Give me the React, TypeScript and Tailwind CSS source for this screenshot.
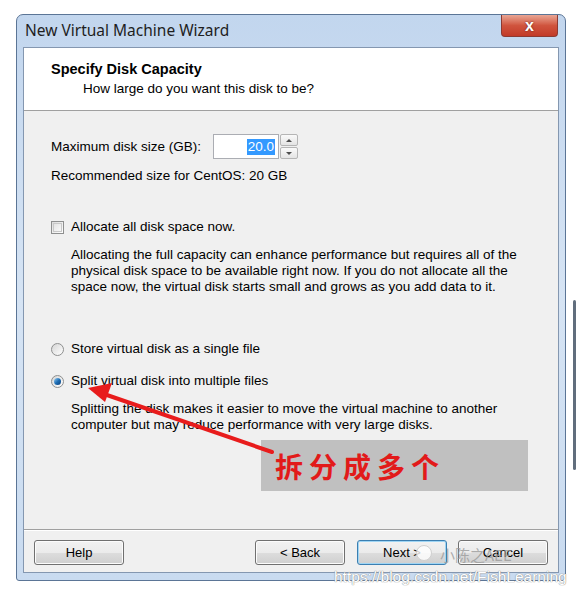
import React from 'react'

const ui = { fontFamily: '"Liberation Sans", Arial, sans-serif' }
const cjk = { fontFamily: '"Noto Sans CJK SC", "Liberation Sans", sans-serif' }

function WinButton({ label, focused }: { label: string; focused?: boolean }) {
  return (
    <div
      className={
        'h-[25px] w-[90px] rounded-[3px] border flex items-center justify-center text-[13px] text-black ' +
        (focused
          ? 'border-[#3c7fb1] shadow-[inset_0_0_0_1px_#9fd5f4]'
          : 'border-[#707070] shadow-[inset_0_0_0_1px_#fcfcfc]')
      }
      style={{
        background: 'linear-gradient(#f2f2f2 0%, #ebebeb 50%, #dddddd 51%, #cfcfcf 100%)',
      }}
    >
      {label}
    </div>
  )
}

function Radio({ checked }: { checked?: boolean }) {
  return (
    <div className="w-[13px] h-[13px] rounded-full border border-[#8e8f8f] bg-gradient-to-br from-[#d6d6d6] to-[#ffffff] flex items-center justify-center shrink-0">
      {checked && (
        <div className="w-[7px] h-[7px] rounded-full bg-gradient-to-br from-[#95d1f5] via-[#1e6fb5] to-[#0b3e7a]" />
      )}
    </div>
  )
}

export default function App() {
  return (
    <div className="relative w-[583px] h-[592px] bg-white overflow-hidden" style={ui}>
      {/* window */}
      <div className="ml-[16px] mt-[14px] w-[550px] h-[567px] rounded-t-[7px] rounded-b-[3px] border border-[#5b7596] bg-gradient-to-b from-[#c2d6ee] via-[#d6e4f4] to-[#c9dbf0] flex flex-col">
        {/* title bar */}
        <div className="h-[32px] flex items-start justify-between shrink-0">
          <span
            className="pl-[8px] pt-[4px] text-[15.5px] text-[#1e1e1e]"
            style={{ fontFamily: '"Noto Sans", "Open Sans", sans-serif' }}
          >
            New Virtual Machine Wizard
          </span>
          <div className="mr-[7px] w-[57px] h-[22px] rounded-b-[4px] border border-t-0 border-[#8c3a32] bg-gradient-to-b from-[#e8a594] via-[#d0543e] to-[#c23a28] flex items-center justify-center">
            <span className="text-white font-bold text-[16px] leading-none [text-shadow:0_0_2px_#5a1a12]">x</span>
          </div>
        </div>

        {/* client area */}
        <div className="mx-[6px] mb-[7px] flex-1 border border-[#8497b0] bg-[#f0f0f0] flex flex-col">
          {/* header */}
          <div className="h-[63px] bg-white border-b border-[#a0a0a0] shrink-0 pl-[27px] pt-[12px]">
            <div className="text-[14.5px] font-bold text-black leading-[18px]">Specify Disk Capacity</div>
            <div className="pl-[32px] mt-[2px] text-[13.5px] text-black leading-[18px]">
              How large do you want this disk to be?
            </div>
          </div>

          {/* body */}
          <div className="flex-1 pl-[27px] text-[13.5px] text-black leading-[16px] flex flex-col">
            <div className="mt-[23px] flex items-center h-[25px]">
              <span className="w-[162px]">Maximum disk size (GB):</span>
              <div className="w-[66px] h-[25px] border border-[#abadb3] bg-white flex items-center justify-end pr-[3px]">
                <span className="bg-[#3399ff] text-white px-[1px] leading-[16px]">20.0</span>
              </div>
              <div className="w-[19px] h-[25px] flex flex-col gap-[1px] pl-[1px]">
                <div className="flex-1 border border-[#b5b5b5] rounded-[2px] bg-gradient-to-b from-[#fafafa] to-[#e4e4e4] flex items-center justify-center">
                  <div className="w-0 h-0 border-l-[3px] border-r-[3px] border-b-[3px] border-l-transparent border-r-transparent border-b-[#4d4d4d]" />
                </div>
                <div className="flex-1 border border-[#b5b5b5] rounded-[2px] bg-gradient-to-b from-[#fafafa] to-[#e4e4e4] flex items-center justify-center">
                  <div className="w-0 h-0 border-l-[3px] border-r-[3px] border-t-[3px] border-l-transparent border-r-transparent border-t-[#4d4d4d]" />
                </div>
              </div>
            </div>
            <div className="mt-[9px]">Recommended size for CentOS: 20 GB</div>

            <div className="mt-[35px] flex items-center gap-[7px]">
              <div className="w-[13px] h-[13px] border border-[#8e8f8f] bg-gradient-to-br from-[#dcdcdc] to-[#ffffff] flex items-center justify-center shrink-0">
                <div className="w-[9px] h-[9px] border border-[#c8c8c8] bg-gradient-to-br from-[#e4e4e4] to-[#f8f8f8]" />
              </div>
              <span>Allocate all disk space now.</span>
            </div>
            <div className="mt-[12px] pl-[20px] w-[520px]">
              Allocating the full capacity can enhance performance but requires all of the
              <br />
              physical disk space to be available right now. If you do not allocate all the
              <br />
              space now, the virtual disk starts small and grows as you add data to it.
            </div>

            <div className="mt-[46px] flex items-center gap-[7px]">
              <Radio />
              <span>Store virtual disk as a single file</span>
            </div>
            <div className="mt-[16px] flex items-center gap-[7px]">
              <Radio checked />
              <span>Split virtual disk into multiple files</span>
            </div>
            <div className="mt-[12px] pl-[20px]">
              Splitting the disk makes it easier to move the virtual machine to another
              <br />
              computer but may reduce performance with very large disks.
            </div>
          </div>

          {/* footer */}
          <div className="h-[43px] border-t border-[#a0a0a0] shadow-[inset_0_1px_0_#ffffff] shrink-0 flex items-start pt-[10px] px-[10px]">
            <WinButton label="Help" />
            <div className="flex-1" />
            <WinButton label="< Back" />
            <div className="w-[12px]" />
            <WinButton label="Next >" focused />
            <div className="w-[11px]" />
            <WinButton label="Cancel" />
          </div>
        </div>
      </div>

      {/* background window edge on the right */}
      <div className="absolute left-[573px] top-[300px] w-[3px] h-[170px] bg-[#3a4a5c] rounded-full opacity-80" />

      {/* annotation box */}
      <div className="absolute left-[261px] top-[440px] w-[267px] h-[51px] bg-[#c0c0c0] flex items-center pl-[14px]">
        <span className="text-[28px] font-bold text-[#e21a1a] tracking-[6px]" style={cjk}>
          拆分成多个
        </span>
      </div>

      {/* red arrow */}
      <svg className="absolute left-0 top-0" width="583" height="592" viewBox="0 0 583 592">
        <line x1="272" y1="452" x2="104" y2="394" stroke="#e81c1c" strokeWidth="4" strokeLinecap="round" />
        <polygon points="88,388 112,383 105,402" fill="#e81c1c" />
      </svg>

      {/* watermarks */}
      <div className="absolute left-[416px] top-[545px] w-[16px] h-[16px] rounded-full bg-white/80 border border-[#d0d0d0]" />
      <div className="absolute left-[440px] top-[544px] text-[15px] text-[#9a9a9a]/80" style={cjk}>
        小陈之AEE
      </div>
      <div
        className="absolute left-[334px] top-[565px] text-[15.5px] text-white"
        style={{ ...ui, textShadow: '0 0 1px #8a8a8a, 0 0 1px #8a8a8a' }}
      >
        https://blog.csdn.net/FishLearning
      </div>
    </div>
  )
}
